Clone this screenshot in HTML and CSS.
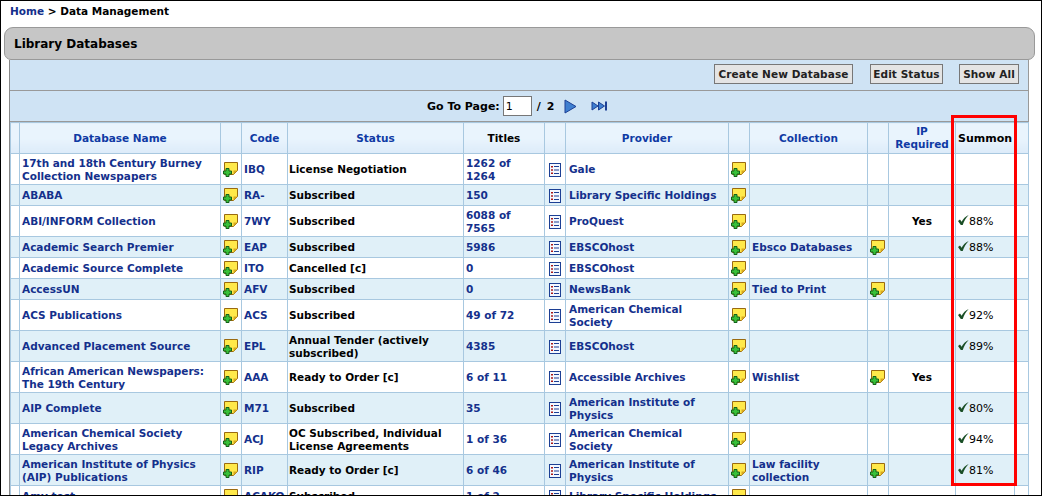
FILE: index.html
```html
<!DOCTYPE html>
<html lang="en">
<head>
    <meta charset="UTF-8">
    <meta name="viewport" content="width=device-width, initial-scale=1.0">
    <title>Library Databases</title>
    <link rel="stylesheet" href="styles.css">
</head>
<body>
    <svg class="sprites" width="0" height="0">
        <symbol id="note" viewBox="0 0 15 15">
            <path d="M1.500 .5h13v8l-4 4h-9z" fill="#ffe94a" stroke="#9a6a10"/>
            <path d="M10.500 12.500v-4h4z" fill="#d8a820"/>
            <path d="M3 6.500h3v2.500h2.500v3h-2.500v2.500h-3v-2.500h-2.500v-3h2.500z" fill="#38c038" stroke="#14601a"/>
        </symbol>
        <symbol id="list" viewBox="0 0 12 14">
            <rect x="0.500" y="0.500" width="11" height="13" fill="#f4f8ff" stroke="#1c3f94"/>
            <path d="M2 3h2v1.500h-2zM2 6.300h2v1.500h-2zM2 9.600h2v1.500h-2z" fill="#a81818"/>
            <path d="M5 3.500h5M5 7h5M5 10.500h5" stroke="#1c3f94"/>
        </symbol>
        <symbol id="check" viewBox="0 0 11 11">
            <path d="M0 6l2-1.600 1.600 2.400c1.500-3 3.900-5.500 7.100-6.800-2.400 2.400-4.600 5.700-6 10h-1.900z" fill="#1a4f26"/>
        </symbol>
    </svg>

    <div class="breadcrumb"><a href="#">Home</a> &gt; Data Management</div>
    <h1 class="title-bar">Library Databases</h1>

    <main class="panel">
        <div class="toolbar">
            <button class="btn btn-create">Create New Database</button>
            <button class="btn btn-status">Edit Status</button>
            <button class="btn">Show All</button>
        </div>
        <div class="pager">
            <span>Go To Page:</span>
            <input class="page-input" type="text" value="1">
            <span class="page-total">/ 2</span>
            <svg class="pager-next" width="13" height="15" viewBox="0 0 13 15"><path d="M1 1l11 6.500-11 6.500z" fill="#3f7fd0" stroke="#1c3f94"/></svg>
            <svg class="pager-last" width="17" height="10" viewBox="0 0 17 10"><path d="M1 1l6 4-6 4zM7.500 1l6 4-6 4z" fill="#3f7fd0" stroke="#1c3f94"/><path d="M15 .5v9" stroke="#1c3f94" stroke-width="2"/></svg>
        </div>

        <table class="db-table">
            <colgroup>
                <col class="c-mark"><col class="c-name"><col class="c-icon"><col class="c-code">
                <col class="c-status"><col class="c-titles"><col class="c-icon"><col class="c-provider">
                <col class="c-icon"><col class="c-collection"><col class="c-icon"><col class="c-ip">
                <col class="c-summon"><col class="c-end">
            </colgroup>
            <thead>
                <tr>
                    <th></th>
                    <th>Database Name</th>
                    <th></th>
                    <th>Code</th>
                    <th>Status</th>
                    <th class="plain">Titles</th>
                    <th></th>
                    <th>Provider</th>
                    <th></th>
                    <th>Collection</th>
                    <th></th>
                    <th>IP Required</th>
                    <th class="plain summon">Summon</th>
                    <th></th>
                </tr>
            </thead>
            <tbody>
                <tr class="tall">
                    <td></td><td><a href="#">17th and 18th Century Burney Collection Newspapers</a></td>
                    <td class="ic"><svg class="note"><use href="#note"/></svg></td><td><a href="#">IBQ</a></td>
                    <td>License Negotiation</td><td><a href="#">1262 of 1264</a></td>
                    <td class="ic"><svg class="list"><use href="#list"/></svg></td><td><a href="#">Gale</a></td>
                    <td class="ic"><svg class="note"><use href="#note"/></svg></td><td></td><td></td><td></td><td></td><td></td>
                </tr>
                <tr>
                    <td></td><td><a href="#">ABABA</a></td>
                    <td class="ic"><svg class="note"><use href="#note"/></svg></td><td><a href="#">RA-</a></td>
                    <td>Subscribed</td><td><a href="#">150</a></td>
                    <td class="ic"><svg class="list"><use href="#list"/></svg></td><td><a href="#">Library Specific Holdings</a></td>
                    <td class="ic"><svg class="note"><use href="#note"/></svg></td><td></td><td></td><td></td><td></td><td></td>
                </tr>
                <tr class="tall">
                    <td></td><td><a href="#">ABI/INFORM Collection</a></td>
                    <td class="ic"><svg class="note"><use href="#note"/></svg></td><td><a href="#">7WY</a></td>
                    <td>Subscribed</td><td><a href="#">6088 of 7565</a></td>
                    <td class="ic"><svg class="list"><use href="#list"/></svg></td><td><a href="#">ProQuest</a></td>
                    <td class="ic"><svg class="note"><use href="#note"/></svg></td><td></td><td></td><td class="yes">Yes</td>
                    <td class="pct"><svg class="check"><use href="#check"/></svg>88%</td><td></td>
                </tr>
                <tr>
                    <td></td><td><a href="#">Academic Search Premier</a></td>
                    <td class="ic"><svg class="note"><use href="#note"/></svg></td><td><a href="#">EAP</a></td>
                    <td>Subscribed</td><td><a href="#">5986</a></td>
                    <td class="ic"><svg class="list"><use href="#list"/></svg></td><td><a href="#">EBSCOhost</a></td>
                    <td class="ic"><svg class="note"><use href="#note"/></svg></td><td><a href="#">Ebsco Databases</a></td>
                    <td class="ic"><svg class="note"><use href="#note"/></svg></td><td></td>
                    <td class="pct"><svg class="check"><use href="#check"/></svg>88%</td><td></td>
                </tr>
                <tr>
                    <td></td><td><a href="#">Academic Source Complete</a></td>
                    <td class="ic"><svg class="note"><use href="#note"/></svg></td><td><a href="#">ITO</a></td>
                    <td>Cancelled [c]</td><td><a href="#">0</a></td>
                    <td class="ic"><svg class="list"><use href="#list"/></svg></td><td><a href="#">EBSCOhost</a></td>
                    <td class="ic"><svg class="note"><use href="#note"/></svg></td><td></td><td></td><td></td><td></td><td></td>
                </tr>
                <tr>
                    <td></td><td><a href="#">AccessUN</a></td>
                    <td class="ic"><svg class="note"><use href="#note"/></svg></td><td><a href="#">AFV</a></td>
                    <td>Subscribed</td><td><a href="#">0</a></td>
                    <td class="ic"><svg class="list"><use href="#list"/></svg></td><td><a href="#">NewsBank</a></td>
                    <td class="ic"><svg class="note"><use href="#note"/></svg></td><td><a href="#">Tied to Print</a></td>
                    <td class="ic"><svg class="note"><use href="#note"/></svg></td><td></td><td></td><td></td>
                </tr>
                <tr class="tall">
                    <td></td><td><a href="#">ACS Publications</a></td>
                    <td class="ic"><svg class="note"><use href="#note"/></svg></td><td><a href="#">ACS</a></td>
                    <td>Subscribed</td><td><a href="#">49 of 72</a></td>
                    <td class="ic"><svg class="list"><use href="#list"/></svg></td><td><a href="#">American Chemical Society</a></td>
                    <td class="ic"><svg class="note"><use href="#note"/></svg></td><td></td><td></td><td></td>
                    <td class="pct"><svg class="check"><use href="#check"/></svg>92%</td><td></td>
                </tr>
                <tr class="tall">
                    <td></td><td><a href="#">Advanced Placement Source</a></td>
                    <td class="ic"><svg class="note"><use href="#note"/></svg></td><td><a href="#">EPL</a></td>
                    <td>Annual Tender (actively subscribed)</td><td><a href="#">4385</a></td>
                    <td class="ic"><svg class="list"><use href="#list"/></svg></td><td><a href="#">EBSCOhost</a></td>
                    <td class="ic"><svg class="note"><use href="#note"/></svg></td><td></td><td></td><td></td>
                    <td class="pct"><svg class="check"><use href="#check"/></svg>89%</td><td></td>
                </tr>
                <tr class="tall">
                    <td></td><td><a href="#">African American Newspapers: The 19th Century</a></td>
                    <td class="ic"><svg class="note"><use href="#note"/></svg></td><td><a href="#">AAA</a></td>
                    <td>Ready to Order [c]</td><td><a href="#">6 of 11</a></td>
                    <td class="ic"><svg class="list"><use href="#list"/></svg></td><td><a href="#">Accessible Archives</a></td>
                    <td class="ic"><svg class="note"><use href="#note"/></svg></td><td><a href="#">Wishlist</a></td>
                    <td class="ic"><svg class="note"><use href="#note"/></svg></td><td class="yes">Yes</td><td></td><td></td>
                </tr>
                <tr class="tall">
                    <td></td><td><a href="#">AIP Complete</a></td>
                    <td class="ic"><svg class="note"><use href="#note"/></svg></td><td><a href="#">M71</a></td>
                    <td>Subscribed</td><td><a href="#">35</a></td>
                    <td class="ic"><svg class="list"><use href="#list"/></svg></td><td><a href="#">American Institute of Physics</a></td>
                    <td class="ic"><svg class="note"><use href="#note"/></svg></td><td></td><td></td><td></td>
                    <td class="pct"><svg class="check"><use href="#check"/></svg>80%</td><td></td>
                </tr>
                <tr class="tall">
                    <td></td><td><a href="#">American Chemical Society Legacy Archives</a></td>
                    <td class="ic"><svg class="note"><use href="#note"/></svg></td><td><a href="#">ACJ</a></td>
                    <td>OC Subscribed, Individual License Agreements</td><td><a href="#">1 of 36</a></td>
                    <td class="ic"><svg class="list"><use href="#list"/></svg></td><td><a href="#">American Chemical Society</a></td>
                    <td class="ic"><svg class="note"><use href="#note"/></svg></td><td></td><td></td><td></td>
                    <td class="pct"><svg class="check"><use href="#check"/></svg>94%</td><td></td>
                </tr>
                <tr class="tall">
                    <td></td><td><a href="#">American Institute of Physics (AIP) Publications</a></td>
                    <td class="ic"><svg class="note"><use href="#note"/></svg></td><td><a href="#">RIP</a></td>
                    <td>Ready to Order [c]</td><td><a href="#">6 of 46</a></td>
                    <td class="ic"><svg class="list"><use href="#list"/></svg></td><td><a href="#">American Institute of Physics</a></td>
                    <td class="ic"><svg class="note"><use href="#note"/></svg></td><td><a href="#">Law facility collection</a></td>
                    <td class="ic"><svg class="note"><use href="#note"/></svg></td><td></td>
                    <td class="pct"><svg class="check"><use href="#check"/></svg>81%</td><td></td>
                </tr>
                <tr>
                    <td></td><td><a href="#">Amy test</a></td>
                    <td class="ic"><svg class="note"><use href="#note"/></svg></td><td><a href="#">ACAKO</a></td>
                    <td>Subscribed</td><td><a href="#">1 of 2</a></td>
                    <td class="ic"><svg class="list"><use href="#list"/></svg></td><td><a href="#">Library Specific Holdings</a></td>
                    <td class="ic"><svg class="note"><use href="#note"/></svg></td><td></td><td></td><td></td><td></td><td></td>
                </tr>
            </tbody>
        </table>
    </main>

    <div class="highlight"></div>
</body>
</html>
```

FILE: styles.css
```css
html {
    background-color: #fff;
}
body {
    position: relative;
    box-sizing: border-box;
    width: 1042px;
    height: 496px;
    margin: 0;
    overflow: hidden;
    border: 1px solid #000;
    background-color: #fff;
    color: #000;
    font-family: "DejaVu Sans", Verdana, sans-serif;
    font-size: 10.5px;
    font-weight: bold;
}
a {
    color: #14308c;
    text-decoration: none;
}
.sprites {
    position: absolute;
}
.breadcrumb {
    height: 26px;
    padding: 3px 0 0 9px;
    box-sizing: border-box;
    line-height: 14px;
}
.title-bar {
    box-sizing: border-box;
    height: 33px;
    margin: 0 6px 0 3px;
    padding: 0 9px;
    border: 1px solid #999;
    border-radius: 9px 9px 7px 7px;
    background-color: #c6c6c6;
    font-size: 12px;
    line-height: 32px;
}
.panel {
    margin: 0 12px 0 8px;
    border-left: 1px solid #888;
    border-right: 1px solid #999;
}
.toolbar {
    display: flex;
    justify-content: flex-end;
    align-items: center;
    box-sizing: border-box;
    height: 31px;
    padding: 0 9px 3px 0;
    border-bottom: 1px solid #999;
    background-color: #cfe3f4;
}
.btn {
    height: 20px;
    margin: 0;
    padding: 0;
    border: 1px solid #777;
    background-color: #e4e4e4;
    color: #222;
    font-family: inherit;
    font-size: 10.5px;
    font-weight: bold;
    letter-spacing: 0.1px;
    line-height: 16px;
    white-space: nowrap;
}
.btn-create {
    width: 139px;
    margin-right: 17px;
}
.btn-status {
    width: 73px;
    margin-right: 16px;
}
.btn:last-child {
    width: 60px;
}
.pager {
    display: flex;
    align-items: center;
    box-sizing: border-box;
    height: 31px;
    padding: 0 0 0 417px;
    border-bottom: 1px solid #999;
    background-color: #cfe3f4;
    font-size: 11px;
}
.page-input {
    box-sizing: border-box;
    width: 29px;
    height: 20px;
    margin: 0 5px 0 3px;
    padding: 0 2px;
    border: 1px solid #777;
    background-color: #fff;
    font-family: inherit;
    font-size: 11px;
}
.page-total {
    word-spacing: 2px;
}
.pager-next {
    margin-left: 10px;
}
.pager-last {
    margin-left: 14px;
}
.db-table {
    width: 1018px;
    margin: 0;
    border-collapse: collapse;
    table-layout: fixed;
    line-height: 13px;
}
.c-mark { width: 9px; }
.c-name { width: 201px; }
.c-icon { width: 21px; }
.c-code { width: 46px; }
.c-status { width: 176px; }
.c-titles { width: 81px; }
.c-provider { width: 163px; }
.c-collection { width: 118px; }
.c-ip { width: 67px; }
.c-summon { width: 59px; }
.c-end { width: 14px; }

.db-table th, .db-table td {
    border: 1px solid #a8c8e0;
    overflow: hidden;
}
.db-table th {
    height: 30px;
    padding: 0;
    background: linear-gradient(#e9f4fd 50%, #dcebf9);
    color: #0f3aa4;
    text-align: center;
}
.db-table th.plain {
    color: #000;
}
.db-table th.summon {
    font-size: 11px;
}
.db-table td {
    height: 19px;
    padding: 1px 2px 0 2px;
    background-color: #fff;
}
.db-table tr.tall td {
    height: 29px;
}
.db-table td:nth-child(5) {
    padding-left: 1px;
}
.db-table td:nth-child(8) {
    padding-left: 3px;
}
.db-table tbody tr:nth-child(even) td {
    background-color: #e0f0f8;
}
.db-table td.ic {
    padding: 0;
}
.db-table td.yes {
    text-align: center;
}
.db-table td.pct {
    font-size: 11px;
    font-weight: normal;
    white-space: nowrap;
}
.note {
    display: block;
    width: 15px;
    height: 15px;
    margin: 1px 0 0 2px;
}
.list {
    display: block;
    width: 12px;
    height: 14px;
    margin: 1px auto 0 auto;
}
.check {
    display: inline-block;
    width: 11px;
    height: 11px;
    vertical-align: -1px;
}
.highlight {
    position: absolute;
    left: 950px;
    top: 114px;
    box-sizing: border-box;
    width: 66px;
    height: 371px;
    border: 3px solid #f00;
}
```
